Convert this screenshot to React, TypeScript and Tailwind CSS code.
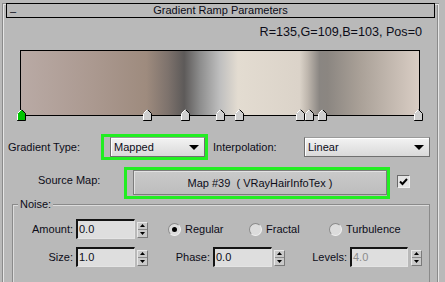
import React from "react";

// stop positions along the ramp, px from the ramp's left edge (x=20)
const markers = [-3, 123, 161, 196, 215, 276, 285, 298, 394];

function Marker({ left, active }: { left: number; active?: boolean }) {
  return (
    <svg className="absolute top-[59px]" style={{ left }} width="9" height="12" viewBox="0 0 9 12">
      <path d="M4.5 0.5 L8.5 4.5 L8.5 11.5 L0.5 11.5 L0.5 4.5 Z" fill={active ? "#00c400" : "#cfcfcf"} stroke="#000" />
      <path d="M0.5 11 L0.5 4.5 L4.5 0.5" fill="none" stroke="#fff" />
    </svg>
  );
}

function Arrow() {
  return (
    <svg width="10" height="5" viewBox="0 0 10 5">
      <path d="M0 0 H10 L5 5 Z" fill="#000" />
    </svg>
  );
}

function Combo({ label, width }: { label: string; width: string }) {
  return (
    <div className={`${width} h-[20px] flex items-center justify-between pl-[3px] pr-[5px] border border-[#6f6f6f] border-t-[#9a9a9a] bg-[linear-gradient(#f3f3f3,#d9d9d9)] shadow-[inset_1px_1px_#fff]`}>
      <span className="text-[11px] text-[#0c0c18]">{label}</span>
      <Arrow />
    </div>
  );
}

function Spinner() {
  return (
    <div className="w-[11px] h-[16px] mt-[1px] self-start flex flex-col border border-[#e8e8e8] border-r-[#7a7a7a] border-b-[#7a7a7a] bg-[#c9c9c9]">
      <div className="flex-1 flex items-center justify-center border-b border-[#8a8a8a]">
        <svg width="5" height="3" viewBox="0 0 5 3"><path d="M2.5 0 L5 3 H0 Z" fill="#000" /></svg>
      </div>
      <div className="flex-1 flex items-center justify-center">
        <svg width="5" height="3" viewBox="0 0 5 3"><path d="M0 0 H5 L2.5 3 Z" fill="#000" /></svg>
      </div>
    </div>
  );
}

function NumField({ value, width, muted }: { value: string; width: string; muted?: boolean }) {
  return (
    <div className={`${width} h-[20px] flex items-center pl-[1px] border-t-2 border-l-2 border-[#141414] border-r border-b border-r-[#e4e4e4] border-b-[#e4e4e4] bg-[#dedede]`}>
      <span className={`text-[11px] ${muted ? "text-[#8c8c8c]" : "text-[#0c0c18]"}`}>{value}</span>
    </div>
  );
}

function Radio({ label, checked, width }: { label: string; checked?: boolean; width: string }) {
  return (
    <div className={`${width} flex items-center gap-[4px]`}>
      <div className="w-[13px] h-[13px] rounded-full bg-[#dcdcdc] border border-[#8a8a8a] border-b-[#f0f0f0] border-r-[#f0f0f0] flex items-center justify-center">
        {checked && <div className="w-[5px] h-[5px] rounded-full bg-black" />}
      </div>
      <span className="text-[11px] text-[#0c0c18]">{label}</span>
    </div>
  );
}

export default function App() {
  return (
    <div className="w-[445px] h-[282px] overflow-hidden bg-[#b9b9b9] pt-[10px] font-['Liberation_Sans',Arial,sans-serif] text-[#0c0c18]">
      <div className="ml-[2px] w-[437px] h-[300px] shadow-[inset_1px_1px_#8a8a8a,inset_2px_2px_#e6e6e6,inset_-1px_0_#e6e6e6,inset_-2px_0_#8a8a8a]">
        {/* rollout title bar */}
        <div className="relative -mt-[7px] mx-[4px] h-[15px] border border-black bg-[#b9b9b9] flex items-center justify-center">
          <span className="absolute left-[3px] top-[1px] text-[11px] leading-[12px]">–</span>
          <span className="text-[11px] leading-[13px]">Gradient Ramp Parameters</span>
        </div>

        <div className="mt-[6px] h-[16px] flex justify-end pr-[17px]">
          <span className="text-[12.6px] leading-[16px]">R=135,G=109,B=103, Pos=0</span>
        </div>

        {/* ramp */}
        <div className="relative ml-[18px] mt-[10px] w-[400px] h-[72px]">
          <div className="h-[66px] border border-black bg-[linear-gradient(to_right,#b9aaa5_0%,#ab9990_18%,#9e8b7e_31.5%,#7d726c_37%,#5d5a59_41%,#8d8d8d_45%,#bfbfbf_50%,#e3dcd1_54.5%,#dbd3c9_70%,#bfb7ae_72%,#8a8682_75%,#8b8681_77%,#a9a097_85%,#d9cdc4_100%)]" />
          {markers.map((left, i) => (
            <Marker key={i} left={left} active={i === 0} />
          ))}
        </div>

        {/* gradient type / interpolation */}
        <div className="mt-[12px] flex items-center">
          <span className="ml-[6px] w-[93px] text-[11px]">Gradient Type:</span>
          <div className="w-[107px] h-[26px] border-[3px] border-[#22ee22] pl-[6px]">
            <Combo label="Mapped" width="w-[95px]" />
          </div>
          <span className="ml-[5px] w-[91px] text-[11px]">Interpolation:</span>
          <Combo label="Linear" width="w-[126px]" />
        </div>

        {/* source map */}
        <div className="mt-[7px] flex items-start">
          <span className="ml-[36px] w-[86px] mt-[5px] text-[11px]">Source Map:</span>
          <div className="w-[266px] h-[32px] border-[3px] border-[#22ee22] pl-[6px]">
            <div className="w-[254px] h-[25px] flex items-center justify-center border border-[#7c7c7c] bg-[linear-gradient(#cacaca,#bdbdbd)] shadow-[inset_1px_1px_#e2e2e2]">
              <span className="text-[11px] pt-[1px]">Map #39&nbsp; ( VRayHairInfoTex )</span>
            </div>
          </div>
          <div className="ml-[7px] mt-[8px] w-[13px] h-[13px] border border-[#6a6a6a] border-r-[#f0f0f0] border-b-[#f0f0f0] bg-[#e4e4e4] flex items-center justify-center">
            <svg width="9" height="8" viewBox="0 0 9 8">
              <path d="M1 3.5 L3.5 6 L8 1" fill="none" stroke="#000" strokeWidth="2" />
            </svg>
          </div>
        </div>

        {/* noise group */}
        <div className="relative ml-[10px] mt-[5px] w-[418px] h-[100px] border border-[#8a8a8a] shadow-[inset_1px_1px_#dcdcdc] pt-[14px]">
          <span className="absolute left-[5px] -top-[8px] px-[2px] bg-[#b9b9b9] text-[11px] leading-[14px]">Noise:</span>

          <div className="flex items-center">
            <span className="w-[60px] text-right text-[11px]">Amount:</span>
            <div className="ml-[3px]"><NumField value="0.0" width="w-[59px]" /></div>
            <div className="ml-[2px] flex"><Spinner /></div>
            <div className="ml-[20px] flex">
              <Radio label="Regular" checked width="w-[81px]" />
              <Radio label="Fractal" width="w-[80px]" />
              <Radio label="Turbulence" width="w-[80px]" />
            </div>
          </div>

          <div className="mt-[8px] flex items-center">
            <span className="w-[60px] text-right text-[11px]">Size:</span>
            <div className="ml-[3px]"><NumField value="1.0" width="w-[59px]" /></div>
            <div className="ml-[2px] flex"><Spinner /></div>
            <span className="w-[62px] text-right text-[11px]">Phase:</span>
            <div className="ml-[3px]"><NumField value="0.0" width="w-[59px]" /></div>
            <div className="ml-[2px] flex"><Spinner /></div>
            <span className="w-[62px] text-right text-[11px]">Levels:</span>
            <div className="ml-[3px]"><NumField value="4.0" width="w-[58px]" muted /></div>
            <div className="ml-[3px] flex"><Spinner /></div>
          </div>
        </div>
      </div>
    </div>
  );
}
